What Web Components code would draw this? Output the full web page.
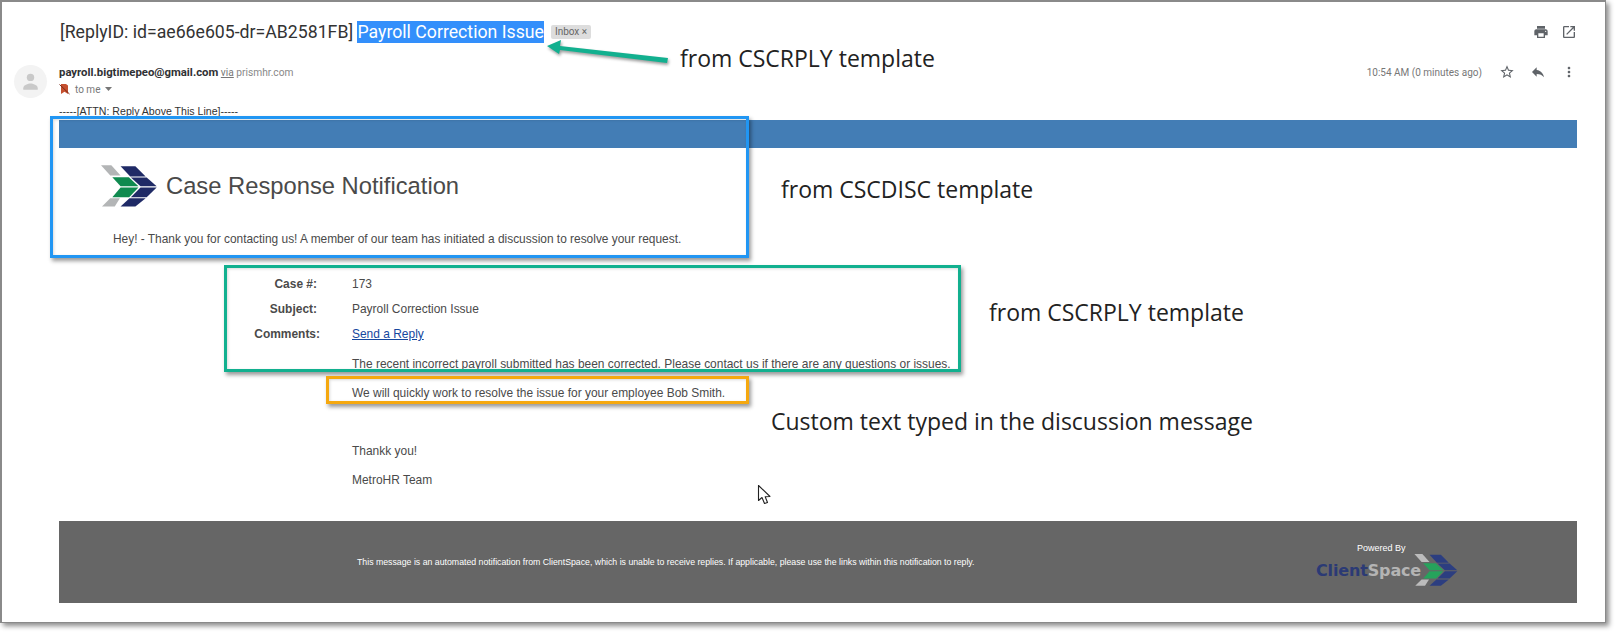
<!doctype html>
<html lang="en">
<head>
<meta charset="utf-8">
<title>Case Response Notification</title>
<style>
  html, body { margin:0; background:#fff; }
  body { width:1615px; height:633px; overflow:hidden; }
</style>
</head>
<body>
<mail-shot>
  <mail-subject>
    <span>[ReplyID: id=ae66e605-dr=AB2581FB] </span><mark>Payroll Correction Issue</mark>
  </mail-subject>
  <mail-sender></mail-sender>
  <attn-line>-----[ATTN: Reply Above This Line]-----</attn-line>
  <case-notice>
    <detail-row label="Case #:">173</detail-row>
    <detail-row label="Subject:">Payroll Correction Issue</detail-row>
    <detail-row label="Comments:" wide><a href="#">Send a Reply</a></detail-row>
    <detail-row style="margin-top:5px">The recent incorrect payroll submitted has been corrected. Please contact us if there are any questions or issues.</detail-row>
    <detail-row style="margin-top:4px">We will quickly work to resolve the issue for your employee Bob Smith.</detail-row>
    <detail-row style="margin-top:33px">Thankk you!</detail-row>
    <detail-row style="margin-top:4px">MetroHR Team</detail-row>
  </case-notice>

  <note-box slot="over" tone="#2196f3" style="left:48px;top:114px;width:699px;height:142px"></note-box>
  <note-box slot="over" tone="#12b08f" style="left:222px;top:263px;width:737px;height:107px"></note-box>
  <note-box slot="over" tone="#f5a80f" style="left:324px;top:374px;width:423px;height:28px"></note-box>
  <note-text slot="over" style="left:678px;top:41px">from CSCRPLY template</note-text>
  <note-text slot="over" style="left:779px;top:172px">from CSCDISC template</note-text>
  <note-text slot="over" style="left:987px;top:295px">from CSCRPLY template</note-text>
  <note-text slot="over" style="left:769px;top:404px">Custom text typed in the discussion message</note-text>
  <svg slot="over" style="position:absolute;left:538px;top:34px" width="135" height="32" viewBox="0 0 135 32">
    <path d="M128 22 L20 10 L21 4 L7 10 L19 18 L20 14 L127 27 Z" fill="#12b08f" style="filter:drop-shadow(1px 2px 1.5px rgba(0,0,0,.4))"/>
  </svg>
  <svg slot="over" style="position:absolute;left:755px;top:482px" width="16" height="22" viewBox="0 0 16 22">
    <path d="M1.5 1.5 V16.5 L5 13.5 L7.5 19.5 L10.5 18.5 L8.2 12.8 L13 12.5 Z" fill="#fff" stroke="#222" stroke-width="1.1" stroke-linejoin="round"/>
  </svg>
</mail-shot>

<script>
// Material icon paths used in the mail header
const ICONS = {
  print: "M19 8H5c-1.66 0-3 1.34-3 3v6h4v4h12v-4h4v-6c0-1.66-1.34-3-3-3zm-3 11H8v-5h8v5zm3-7c-.55 0-1-.45-1-1s.45-1 1-1 1 .45 1 1-.45 1-1 1zm-1-9H6v4h12V3z",
  open: "M19 19H5V5h7V3H5c-1.11 0-2 .9-2 2v14c0 1.1.89 2 2 2h14c1.1 0 2-.9 2-2v-7h-2v7zM14 3v2h3.59l-9.83 9.83 1.41 1.41L19 6.41V10h2V3h-7z",
  star: "M22 9.24l-7.19-.62L12 2 9.19 8.63 2 9.24l5.46 4.73L5.82 21 12 17.27 18.18 21l-1.63-7.03L22 9.24zM12 15.4l-3.76 2.27 1-4.28-3.32-2.88 4.38-.38L12 6.1l1.71 4.04 4.38.38-3.32 2.88 1 4.28L12 15.4z",
  reply: "M10 9V5l-7 7 7 7v-4.1c5 0 8.5 1.6 11 5.1-1-5-4-10-11-11z",
  more: "M12 8c1.1 0 2-.9 2-2s-.9-2-2-2-2 .9-2 2 .9 2 2 2zm0 2c-1.1 0-2 .9-2 2s.9 2 2 2 2-.9 2-2-.9-2-2-2zm0 6c-1.1 0-2 .9-2 2s.9 2 2 2 2-.9 2-2-.9-2-2-2z",
};

function icon(name, size, color) {
  return `<svg width="${size}" height="${size}" viewBox="0 0 24 24" fill="${color}"><path d="${ICONS[name]}"/></svg>`;
}

function define(tag, style, markup, init) {
  customElements.define(tag, class extends HTMLElement {
    constructor() {
      super();
      this.attachShadow({ mode: "open" });
    }
    connectedCallback() {
      const html = typeof markup === "function" ? markup(this) : markup;
      this.shadowRoot.innerHTML = `<style>${style}</style>${html}`;
      if (init) init(this);
    }
  });
}

// outer screenshot frame; annotations go in the "over" slot
define("mail-shot", `
  :host { display:block; position:relative; box-sizing:border-box; width:1606px; height:623px;
          border:1px solid #8a8a8a; border-top-width:2px; border-left-width:2px; background:#fff;
          box-shadow:3px 3px 5px rgba(0,0,0,.45); font-family:"Liberation Sans",Arial,sans-serif; }
  .flow { display:flex; flex-direction:column; height:100%; }
`, `<div class="flow"><slot></slot></div><slot name="over"></slot>`);

define("mail-subject", `
  :host { display:flex; align-items:center; height:22px; margin-top:19px; padding:0 28px 0 58px;
          font:17.7px/22px Roboto,"Liberation Sans",sans-serif; color:#333; white-space:pre; }
  ::slotted(mark) { background:#338ffb; color:#fff; }
  .chip { margin-left:7px; height:14px; padding:0 4px; background:#ddd; border-radius:2px; color:#666;
          font:10px/14px Roboto,sans-serif; }
  .tools { margin-left:auto; display:flex; gap:12px; }
  svg { display:block; }
`, () => `<slot></slot><span class="chip">Inbox ×</span>
  <div class="tools">${icon("print", 16, "#5f6368")}${icon("open", 16, "#5f6368")}</div>`);

define("mail-sender", `
  :host { display:grid; grid-template-columns:57px 1fr auto; margin-top:19px; padding-right:28px;
          font-family:Roboto,"Liberation Sans",sans-serif; color:#5f6368; }
  .avatar { width:33px; height:33px; margin:3px 0 0 12px; border-radius:50%; background:#f3f3f3; }
  .who { height:19px; line-height:20px; font-size:10.2px; color:#888; }
  .who b { color:#303134; font-weight:700; font-size:11.35px; }
  .who u { color:#777; }
  .to { display:flex; align-items:center; gap:5px; height:16px; font-size:10px; color:#777; }
  .side { display:flex; align-items:center; height:20px; font-size:10px; color:#777; }
  .side svg { display:block; }
  .side .t { margin-right:17px; }
  .side .gap { width:15px; }
`, () => `
  <svg class="avatar" viewBox="0 0 32 32"><circle cx="16" cy="12" r="3.6" fill="#c9c9c9"/><path d="M9 22.5c0-3.2 4.700-4.600 7-4.600s7 1.400 7 4.600V24H9z" fill="#c9c9c9"/></svg>
  <div>
    <div class="who"><b>payroll.bigtimepeo@gmail.com</b> <u>via</u> prismhr.com</div>
    <div class="to">
      <svg width="11" height="12" viewBox="0 0 11 12"><path d="M2 1h5l2 1.500V11L5.500 8.800 2 11z" fill="#c5502f"/><path d="M.5 1.500 10.500 11" stroke="#7a2a1a" stroke-width="1"/></svg>
      <span>to me</span><svg width="7" height="4" viewBox="0 0 7 4"><path d="M0 0h7L3.500 4z" fill="#777"/></svg>
    </div>
  </div>
  <div class="side">
    <span class="t">10:54 AM (0 minutes ago)</span>
    ${icon("star", 16, "#5f6368")}<span class="gap"></span>${icon("reply", 16, "#5f6368")}<span class="gap"></span>${icon("more", 16, "#5f6368")}
  </div>`);

define("attn-line", `
  :host { display:block; height:14px; margin:6px 0 2px 57px; font-size:10.6px; line-height:14px; color:#333; }
`, `<slot></slot>`);

// the chevron logo, coordinates traced from the reference at 3x
define("brand-mark", `
  :host { display:block; }
  svg { display:block; width:100%; height:100%; }
  .s { fill:var(--mark-grey,#b3b5b6); }
  .g { fill:var(--mark-green,#0f8a4f); }
  .n { fill:var(--mark-navy,#1f2a66); }
`, `<svg viewBox="35 42 163 121">
  <g class="s"><path d="M35 42h30l27 30H62z"/><path d="M62 138h28l-15 24H38z"/></g>
  <g class="g"><path d="M68 77h48l28 26H92z"/><path d="M92 107h52l-27 28H68z"/></g>
  <g class="n"><path d="M92 45h43l30 30h-45z"/><path d="M122 78h46l29 25h-47z"/><path d="M150 107h47l-29 28h-46z"/><path d="M118 138h47l-30 24H92z"/></g>
</svg>`);

define("case-notice", `
  :host { display:block; margin:0 28px 0 57px; font-family:"Liberation Sans",Arial,sans-serif; color:#4a4a4a; }
  .banner { height:28px; background:#437db5; }
  .head { display:flex; align-items:center; gap:9px; height:42px; margin:18px 0 0 42px; }
  brand-mark { width:56px; height:42px; margin-top:-3px; }
  h1 { margin:-2px 0 0; font-size:23.75px; font-weight:400; color:#4a4a4a; }
  .hey { height:16px; margin:23px 0 0 54px; font-size:11.92px; line-height:16px; }
  .details { margin-top:25px; }
  notice-footer { margin-top:28px; }
`, `<div class="banner"></div>
  <div class="head"><brand-mark></brand-mark><h1>Case Response Notification</h1></div>
  <div class="hey">Hey! - Thank you for contacting us! A member of our team has initiated a discussion to resolve your request.</div>
  <div class="details"><slot></slot></div>
  <notice-footer></notice-footer>`);

define("detail-row", `
  :host { display:grid; grid-template-columns:258px 1fr; column-gap:35px; height:25px; align-items:center;
          font-size:11.96px; line-height:25px; color:#4a4a4a; }
  .l { text-align:right; font-weight:700; }
  :host([wide]) .l { margin-right:-3px; }
  ::slotted(a) { color:#15479e; }
`, (el) => `<div class="l">${el.getAttribute("label") || ""}</div><div><slot></slot></div>`);

define("notice-footer", `
  :host { display:flex; align-items:center; height:82px; padding-left:298px; background:#666; color:#fff; font-size:8.75px;
          --mark-grey:#bcbcbc; --mark-green:#26a35c; --mark-navy:#2c3e80; }
  .msg { flex:1; }
  .by { align-self:flex-start; width:262px; padding-top:21px; box-sizing:border-box; }
  .by div { margin-left:42px; line-height:12px; font-size:9px; }
  .row { display:flex; align-items:center; height:32px; }
  .word { margin-left:1px; font:700 16px "DejaVu Sans",sans-serif; letter-spacing:-.15px; color:#b4b4b4; }
  .word b { color:#2b3a75; }
  brand-mark { width:44px; height:32px; margin-left:-7px; }
`, `<span class="msg">This message is an automated notification from ClientSpace, which is unable to receive replies. If applicable, please use the links within this notification to reply.</span>
  <div class="by"><div>Powered By</div><span class="row"><span class="word"><b>Client</b>Space</span><brand-mark></brand-mark></span></div>`);

// coloured annotation rectangle
define("note-box", `
  :host { display:block; position:absolute; box-sizing:border-box; border:3px solid var(--tone);
          box-shadow:2px 3px 4px rgba(0,0,0,.4), inset 1px 1px 3px rgba(0,0,0,.15); }
`, ``, (el) => el.style.setProperty("--tone", el.getAttribute("tone")));

define("note-text", `
  :host { display:block; position:absolute; font:23px/30px "Open Sans",sans-serif; color:#222; white-space:nowrap; }
`, `<slot></slot>`);
</script>
</body>
</html>
